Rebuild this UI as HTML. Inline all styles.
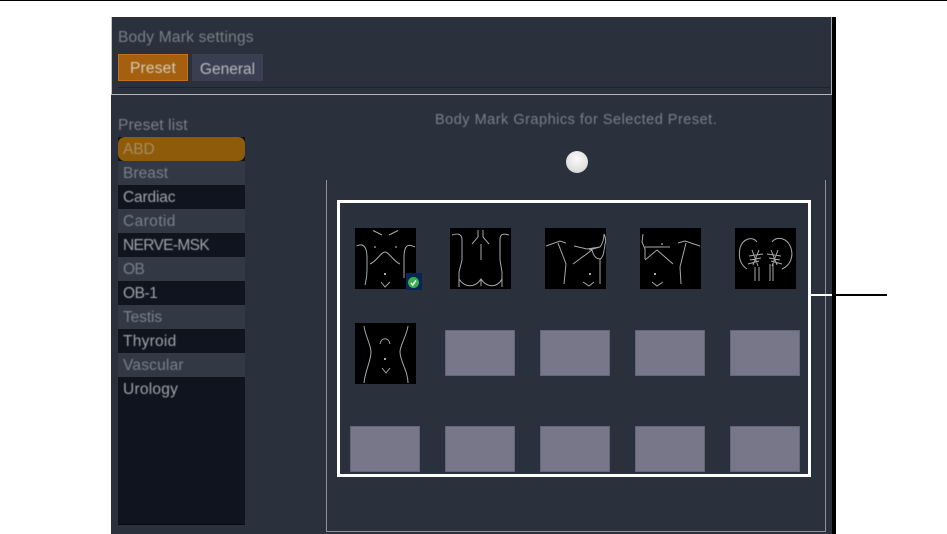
<!DOCTYPE html>
<html><head><meta charset="utf-8"><style>
html,body{margin:0;padding:0;background:#fff;width:947px;height:534px;overflow:hidden}
body{position:relative;font-family:"Liberation Sans",sans-serif}
div{position:absolute;box-sizing:border-box}
.t{white-space:nowrap;font-size:15.5px;line-height:20px}
.t span,.r span{filter:blur(.5px);display:inline-block}
.r{left:118px;width:127px;height:24px;padding-left:5px;line-height:26px;font-size:15.5px;white-space:nowrap}
.a{background:#323945;color:#7a808a}
.b{background:#0f141e;color:#a0a4aa}
.g{width:70px;height:46px;background:#777789;border:1px solid #62667a}
svg.m{position:absolute;width:61px;height:61px;background:#000}
svg.m path{fill:none;stroke:#a8a8a8;stroke-width:1;filter:blur(.25px)}
svg.m .d{fill:#ddd;stroke:none}
</style></head><body>
<div style="left:0;top:0;width:947px;height:1px;background:#000"></div>
<div style="left:111px;top:17px;width:721px;height:517px;background:#2a313c"></div>
<div style="left:832px;top:17px;width:4px;height:517px;background:#000"></div>
<div style="left:111px;top:17px;width:1px;height:78px;background:#c0c2c4"></div>
<div style="left:831px;top:17px;width:1px;height:78px;background:#a9acaf"></div>
<div style="left:111px;top:94px;width:721px;height:1px;background:#b4b6b8"></div>
<div style="left:118px;top:87px;width:712px;height:1px;background:#1e222b"></div>
<div class="t" style="left:118px;top:28px;color:#7a808a;letter-spacing:.22px"><span>Body Mark settings</span></div>
<div class="t" style="left:118px;top:54px;width:70px;height:27px;background:#a5600f;border:1px solid #c2701b;color:#d4cbbd;text-align:center;line-height:28px;letter-spacing:.2px"><span>Preset</span></div>
<div class="t" style="left:192px;top:54px;width:71px;height:27px;background:#393e50;color:#b8bbc0;text-align:center;line-height:31px"><span>General</span></div>
<div class="t" style="left:118px;top:116px;color:#7a808a;letter-spacing:.15px"><span>Preset list</span></div>
<div style="left:118px;top:161px;width:127px;height:364px;background:#0f141e;border-bottom:1px solid #07090e"></div>
<div style="left:118px;top:137px;width:127px;height:24px;background:#0f141e"></div>
<div class="r" style="top:137px;background:#8e5b0a;color:#a98c62;border-radius:7px;letter-spacing:-.1px"><span>ABD</span></div>
<div class="r a" style="top:161px;letter-spacing:.05px"><span>Breast</span></div>
<div class="r b" style="top:185px;letter-spacing:-.15px"><span>Cardiac</span></div>
<div class="r a" style="top:209px;letter-spacing:.4px"><span>Carotid</span></div>
<div class="r b" style="top:233px;letter-spacing:-.65px"><span>NERVE-MSK</span></div>
<div class="r a" style="top:257px;letter-spacing:-.5px"><span>OB</span></div>
<div class="r b" style="top:281px;letter-spacing:-.45px"><span>OB-1</span></div>
<div class="r a" style="top:305px;letter-spacing:-.1px"><span>Testis</span></div>
<div class="r b" style="top:329px;letter-spacing:.25px"><span>Thyroid</span></div>
<div class="r a" style="top:353px;letter-spacing:.2px"><span>Vascular</span></div>
<div class="r b" style="top:377px;letter-spacing:.25px"><span>Urology</span></div>
<div class="t" style="left:435px;top:110px;color:#7a808a;font-size:14.5px;letter-spacing:.5px"><span>Body Mark Graphics for Selected Preset.</span></div>
<div style="left:566px;top:151px;width:22px;height:22px;border-radius:50%;background:radial-gradient(circle at 50% 35%,#fafafa 0,#e4e4e4 55%,#c9c9c9 100%)"></div>
<div style="left:326px;top:180px;width:500px;height:352px;border:1px solid #8e9296;border-top:none"></div>
<div style="left:337px;top:200px;width:474px;height:277px;border:3px solid #fff"></div>
<div style="left:811px;top:294px;width:21px;height:2px;background:#fff"></div>
<div style="left:836px;top:294px;width:51px;height:2px;background:#000"></div>

<svg class="m" viewBox="0 0 61 61" style="left:355px;top:228px"><path d="M18 2.500L27 7M34 7L43 2.500M1.500 18C8 15 12 18 12 30V42C12 50 11 52 10 57M60 19C52 15 49 18 49 30V50M15 36C22 33 26 24 30 24C34 24 38 33 45 36M26 54L30 59L35 54"/><circle class="d" cx="20" cy="19" r=".8"/><circle class="d" cx="41" cy="19" r=".8"/><circle class="d" cx="30" cy="46" r="1"/></svg>
<svg class="m" viewBox="0 0 61 61" style="left:450px;top:228px"><path d="M2 7C8 5 12 6 12 12V32L9 44V59M9 51C15 60 25 60 31 51C37 60 47 60 52 51M59 7C53 5 50 6 50 12V32L52 44L52 59M31 16V32M31 51V58M22 16L28 9V2M39 16L33 9V2"/></svg>
<svg class="m" viewBox="0 0 61 61" style="left:545px;top:228px"><path d="M1 18L15 13L21 15M13 15L21 36L19 56M29 18L42 21L55 19C58 15 59 10 59 6M59 6C61 10 61 14 60 16C59 24 58 30 55 31C50 31 48 26 47 22L28 36M44 22L55 19M55 31V56M38 54L44 58L49 54"/><circle class="d" cx="45" cy="46" r="1"/></svg>
<svg class="m" viewBox="0 0 61 61" style="left:640px;top:228px"><path d="M3 6L2 14L5 21V31M5 19L30 19M5 32L17 22L33 36M38 15L45 13L60 18M46 15L40 39L41 56M12 54L17 58L23 54"/><circle class="d" cx="15" cy="46" r="1"/><circle class="d" cx="22" cy="16" r=".8"/></svg>
<svg class="m" viewBox="0 0 61 61" style="left:735px;top:228px"><path d="M22 14C18 8 8 10 5 20C3 30 6 37 12 41M37 14C41 8 52 9 56 20C59 30 54 38 47 41M14 28L28 26M15 32L26 30M17 22L23 38M24 22L18 37M13 36L24 33M46 28L32 26M45 32L34 30M43 22L37 38M36 22L42 37M47 36L36 33M20 39V53M24 39V53M35 36V53M38 36V53"/></svg>
<svg class="m" viewBox="0 0 61 61" style="left:355px;top:323px"><path d="M9 3C10 12 16 22 16 29C16 38 10 48 9 60M53 3C52 12 45 22 45 29C45 38 53 48 53 60M25 21C26 14 34 14 35 21M27 45L31 50L35 45"/><circle class="d" cx="30" cy="36" r="1"/></svg>

<div style="left:406px;top:273px;width:16px;height:17px;background:#0a2455"></div>
<div style="left:408px;top:277px;width:11px;height:11px;border-radius:50%;background:#35b04c"></div>
<svg style="position:absolute;left:408px;top:277px" width="11" height="11" viewBox="0 0 11 11"><path d="M3 6L4.700 8L8 3.500" fill="none" stroke="#eafbe9" stroke-width="1.500"/></svg>

<div class="g" style="left:445px;top:330px"></div>
<div class="g" style="left:540px;top:330px"></div>
<div class="g" style="left:635px;top:330px"></div>
<div class="g" style="left:730px;top:330px"></div>
<div class="g" style="left:350px;top:426px"></div>
<div class="g" style="left:445px;top:426px"></div>
<div class="g" style="left:540px;top:426px"></div>
<div class="g" style="left:635px;top:426px"></div>
<div class="g" style="left:730px;top:426px"></div>
</body></html>
